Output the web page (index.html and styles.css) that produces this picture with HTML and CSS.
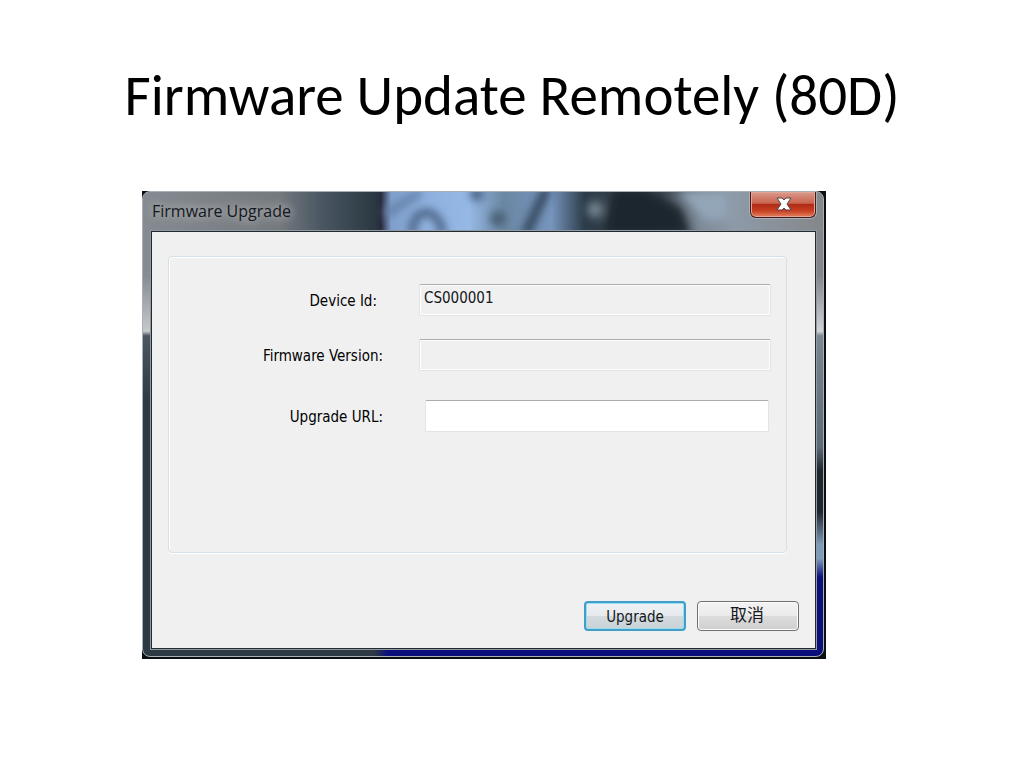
FILE: index.html
```html
<!DOCTYPE html>
<html lang="en">
<head>
  <meta charset="utf-8">
  <title>Firmware Update Remotely (80D)</title>
  <link rel="stylesheet" href="styles.css">
</head>
<body>
  <h1 class="title">Firmware Update Remotely (80D)</h1>

  <div class="window">
    <div class="frame">
      <!-- wallpaper seen through the glass title bar -->
      <svg class="glass" viewBox="0 0 680 38" preserveAspectRatio="none" aria-hidden="true">
        <defs>
          <linearGradient id="wall">
            <stop offset="0" stop-color="#858b91"/>
            <stop offset="0.2" stop-color="#74797e"/>
            <stop offset="0.26" stop-color="#4b5863"/>
            <stop offset="0.34" stop-color="#2b3943"/>
            <stop offset="0.35" stop-color="#292b3c"/>
            <stop offset="0.365" stop-color="#7f9fcb"/>
            <stop offset="0.41" stop-color="#8eb0de"/>
            <stop offset="0.48" stop-color="#96b8e5"/>
            <stop offset="0.53" stop-color="#6b87a3"/>
            <stop offset="0.6" stop-color="#7795bd"/>
            <stop offset="0.65" stop-color="#2b3b48"/>
            <stop offset="0.7" stop-color="#39434c"/>
            <stop offset="0.76" stop-color="#3a434c"/>
            <stop offset="0.82" stop-color="#7d8a98"/>
            <stop offset="0.87" stop-color="#8d9aa8"/>
            <stop offset="1" stop-color="#858789"/>
          </linearGradient>
          <filter id="soft" x="-10%" y="-50%" width="120%" height="200%"><feGaussianBlur stdDeviation="4"/></filter>
        </defs>
        <rect width="680" height="38" fill="url(#wall)"/>
        <g filter="url(#soft)">
          <path d="M270 42c-2-14 5-22 13-22s15 8 17 22" fill="none" stroke="#4c6485" stroke-width="8"/>
          <path d="M242 22L278 0" stroke="#6482a9" stroke-width="8"/>
          <circle cx="334" cy="2" r="7" fill="#4c6586"/>
          <circle cx="355" cy="26" r="8" fill="#496176"/>
          <path d="M404-4L382 42" stroke="#30445a" stroke-width="9"/>
          <circle cx="452" cy="17" r="8" fill="#73838f"/>
          <path d="M470-4h30l38 20 10 26h-88z" fill="#1f262e"/>
          <path d="M535 0h50v26l-22 2z" fill="#93a5b8"/>
        </g>
      </svg>
      <div class="titlebar">
        <span class="caption">Firmware Upgrade</span>
        <button class="close" type="button" aria-label="Close">
          <svg width="16" height="14" viewBox="0 0 16 14" aria-hidden="true">
            <path d="M1 1h5l2 2 2-2h5l-4 6 4 6h-5l-2-2-2 2H1l4-6z" fill="#fff" stroke="#59434a" stroke-width="1"/>
          </svg>
        </button>
      </div>
      <form class="client">
        <div class="group">
          <div class="row">
            <label class="inset" for="device">Device Id:</label>
            <input id="device" type="text" value="CS000001" readonly>
          </div>
          <div class="row">
            <label for="version">Firmware Version:</label>
            <input id="version" type="text" readonly>
          </div>
          <div class="row url">
            <label for="url">Upgrade URL:</label>
            <input id="url" type="text">
          </div>
        </div>
        <div class="actions">
          <button class="btn primary" type="button">Upgrade</button>
          <button class="btn cancel" type="button" lang="zh">取消</button>
        </div>
      </form>
    </div>
  </div>
</body>
</html>
```
FILE: styles.css
```css
* {
  box-sizing: border-box;
}

body {
  margin: 0;
  background: #fff;
  color: #000;
  font-family: "DejaVu Sans Condensed", "Noto Sans", "Noto Sans CJK SC", sans-serif;
  font-size: 15px;
}

.title {
  margin: 0;
  padding: 64px 0 63px;
  font-family: Carlito, Lato, sans-serif;
  font-size: 57px;
  line-height: 64px;
  font-weight: normal;
  text-align: center;
}

.window {
  margin: 0 198px 40px 142px;
  padding: 0 2px 2px 0;
  background: #0b0f14;
}

.frame {
  position: relative;
  padding: 0 7px 7px 8px;
  border: 1px solid #a9b0b5;
  border-radius: 8px;
  overflow: hidden;
  background:
    linear-gradient(90deg, #2d3945 34%, #0a0f7c 36%) bottom / 100% 8px no-repeat,
    linear-gradient(#858b91, #858b91 18%, #c6c9cc 30%, #4b5660 31%, #2d3945 45%, #2d3945) left / 9px 100% no-repeat,
    linear-gradient(#858789, #85858c 18%, #d0d3d6 30%, #7b8792 31%, #5a6a78 55%, #20262d 60%, #202630 69%, #7d9bbd 76%, #7d9bbd 79%, #0a0f7c 83%) right / 9px 100% no-repeat;
}

.glass {
  position: absolute;
  left: 0;
  top: 0;
  width: 100%;
  height: 39px;
}

.titlebar {
  position: relative;
  display: flex;
  justify-content: space-between;
  align-items: flex-start;
  height: 39px;
}

.caption {
  padding: 8px 1px;
  font-family: "Open Sans", "Noto Sans", sans-serif;
  font-size: 16px;
  line-height: 22px;
  color: #15171c;
  text-shadow: 0 0 8px #b5b8bb, 0 0 12px #b5b8bb;
}

.close {
  display: flex;
  justify-content: center;
  align-items: center;
  width: 66px;
  height: 26px;
  padding: 0 0 2px 2px;
  border: 1px solid #43191a;
  border-top: 0;
  border-radius: 0 0 6px 6px;
  background: linear-gradient(#d99a8c, #c8644f 45%, #b02b15 50%, #c63f22 75%, #e6825f);
  box-shadow: inset 0 0 0 1px #e0a799, 0 0 0 1px #a9b0b5;
}

.client {
  position: relative;
  padding: 24px 28px 17px 16px;
  border: 1px solid #202a33;
  outline: 1px solid #929a9f;
  background: #f0f0f0;
}

.group {
  display: flex;
  flex-direction: column;
  gap: 23px;
  height: 297px;
  padding: 27px 15px;
  border: 1px solid #d5dfe5;
  border-radius: 4px;
  box-shadow: inset 1px 1px 0 #fff, 0 1px 0 #fff;
}

.row {
  display: flex;
  align-items: center;
}

.row label {
  width: 199px;
  margin-right: 36px;
  padding-top: 2px;
  text-align: right;
  line-height: 20px;
}

.row .inset {
  padding-right: 6px;
}

.row input {
  flex: 1;
  min-width: 0;
  height: 32px;
  padding: 0 4px 4px;
  border: 1px solid #e2e3e6;
  border-top-color: #aaabae;
  border-radius: 2px;
  background: #fff;
  box-shadow: inset 0 0 0 1px #fff;
  color: #15171c;
  font: inherit;
}

.row input[readonly] {
  background: #f0f0f0;
}

.url {
  padding: 6px 2px 0 0;
}

.url input {
  margin-left: 6px;
}

.actions {
  display: flex;
  justify-content: flex-end;
  gap: 11px;
  margin: 48px -12px 0 0;
}

.btn {
  width: 102px;
  height: 30px;
  padding: 2px 0 0;
  border: 1px solid #707070;
  border-radius: 4px;
  background: linear-gradient(#f3f3f3, #ebebeb 50%, #dddddd 50%, #cfcfcf);
  box-shadow: inset 0 0 0 1px #fcfcfc;
  color: #15171c;
  font: inherit;
}

.primary {
  border: 2px solid #3f9fc9;
  background: linear-gradient(#eef2f4, #e6eaec 50%, #d4dbdf 50%, #c8d2d7);
  box-shadow: inset 0 0 0 1px #9bdcf3;
}

.cancel {
  padding: 0 2px 2px 0;
  font-size: 17px;
  line-height: 24px;
}
```
